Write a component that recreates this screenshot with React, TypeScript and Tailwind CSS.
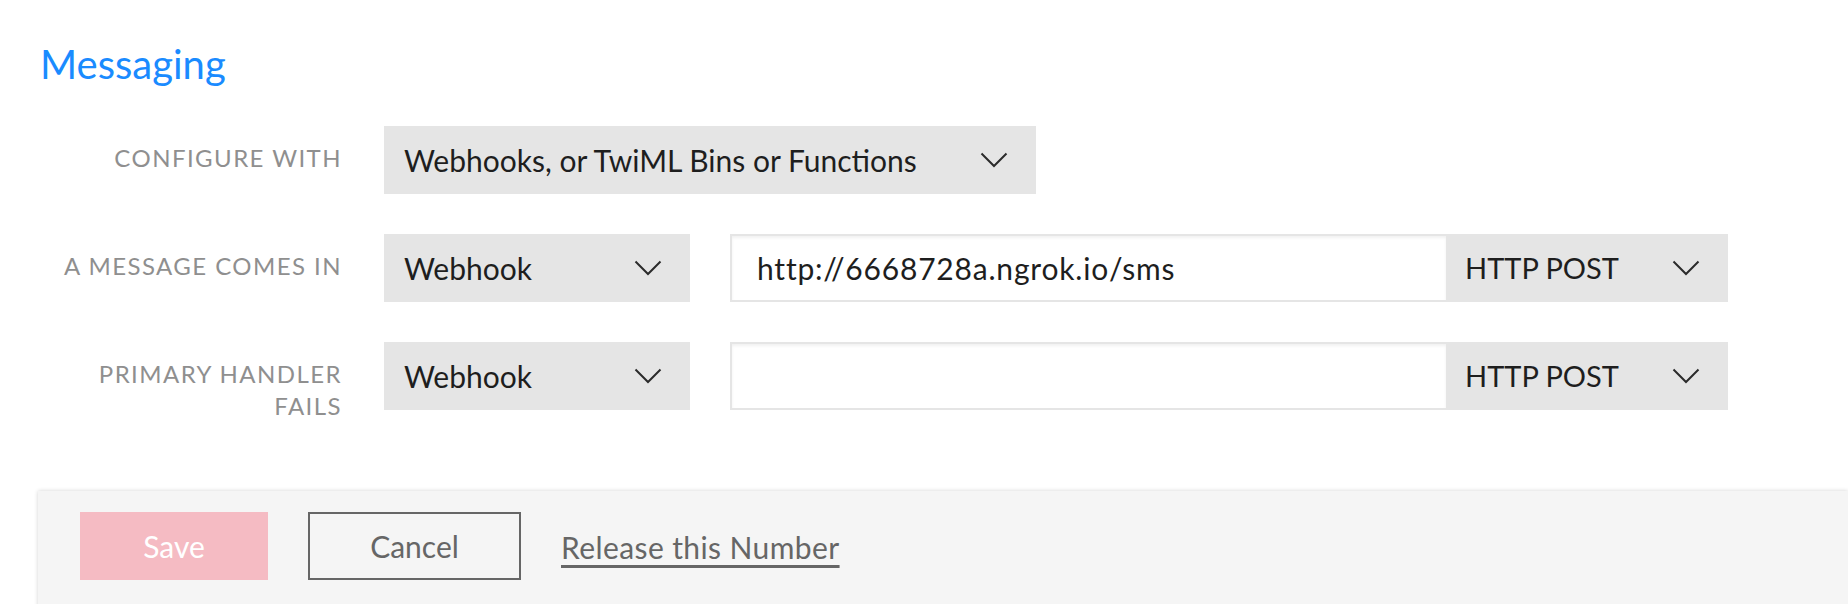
import React from "react";

const font = { fontFamily: "Lato, 'Open Sans', sans-serif" };

function Chevron() {
  return (
    <svg width="28" height="16" viewBox="0 0 28 16" className="shrink-0">
      <polyline points="1.5,1.5 14,14 26.5,1.5" fill="none" stroke="#2b2b2b" strokeWidth="2" />
    </svg>
  );
}

function Select({ value, className }: { value: string; className: string }) {
  return (
    <div className={`flex h-[68px] items-center justify-between bg-[#e5e5e5] pl-5 pr-7 text-[#1e1e1e] ${className}`}>
      <span>{value}</span>
      <Chevron />
    </div>
  );
}

function Label({ children }: { children: React.ReactNode }) {
  return (
    <div className="w-[290px] shrink-0 pt-[16px] text-right text-[24px] uppercase leading-[32px] tracking-[0.06em] text-[#8f8f8f]">
      {children}
    </div>
  );
}

function UrlField({ value }: { value: string }) {
  return (
    <div className="flex h-[68px]">
      <div className="flex w-[716px] items-center border-2 border-r-0 border-[#e5e5e5] bg-white pl-[25px] text-[30px] tracking-[0.8px] text-[#1e1e1e] shadow-[inset_0_2px_3px_rgba(0,0,0,0.06)]">
        {value}
      </div>
      <Select value="HTTP POST" className="w-[282px] pl-[19px] text-[29px]" />
    </div>
  );
}

export default function App() {
  return (
    <div className="h-[604px] overflow-hidden bg-white" style={font}>
      <h1 className="pl-10 pt-[36px] text-[40px] leading-[56px] text-[#1a8bff]">Messaging</h1>
      <div className="mt-[34px] flex flex-col gap-10 pl-[52px]">
        <div className="flex gap-[42px]">
          <Label>Configure with</Label>
          <Select value="Webhooks, or TwiML Bins or Functions" className="w-[652px] text-[30px]" />
        </div>
        <div className="flex gap-[42px]">
          <Label>A message comes in</Label>
          <div className="flex gap-10">
            <Select value="Webhook" className="w-[306px] text-[30px]" />
            <UrlField value="http://6668728a.ngrok.io/sms" />
          </div>
        </div>
        <div className="flex gap-[42px]">
          <Label>Primary handler fails</Label>
          <div className="flex gap-10">
            <Select value="Webhook" className="w-[306px] text-[30px]" />
            <UrlField value="" />
          </div>
        </div>
      </div>
      <div className="ml-[38px] mt-[69px] flex h-[120px] items-start gap-10 bg-[#f5f5f5] pl-[42px] pt-[21px] shadow-[0_0_4px_rgba(0,0,0,0.18)]">
        <button className="h-[68px] w-[188px] bg-[#f5bbc3] text-[30px] text-white">Save</button>
        <button className="h-[68px] w-[213px] border-2 border-[#666666] text-[30px] text-[#666666]">Cancel</button>
        <a className="mt-[13px] text-[30px] tracking-[0.4px] text-[#666666] underline underline-offset-[6px]">Release this Number</a>
      </div>
    </div>
  );
}
